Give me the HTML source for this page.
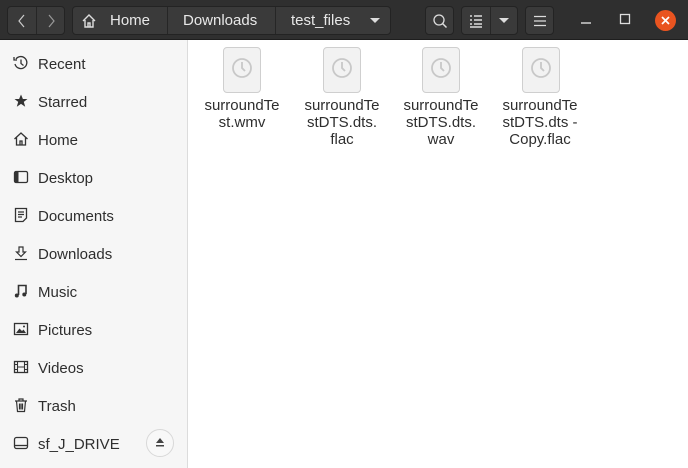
<!DOCTYPE html>
<html><head><style>
*{margin:0;padding:0;box-sizing:border-box}
body{width:688px;height:468px;overflow:hidden;font-family:"Liberation Sans","DejaVu Sans",sans-serif;background:#fff;position:relative}
.hdr{position:absolute;left:0;top:0;width:688px;height:40px;background:#2f2f2f;border-bottom:1px solid #1e1e1e}
.btn{position:absolute;top:6px;height:29px;background:#3a3a3a;border:1px solid #232323;border-radius:4px;color:#ddd}
.sep{position:absolute;top:0;bottom:0;width:1px;background:#262626}
.crumb{position:absolute;top:5px;font-size:15px;color:#e8e8e8}
.side{position:absolute;left:0;top:40px;width:188px;height:428px;background:#f6f6f6;border-right:1px solid #dcdcdc}
.it{position:absolute;left:38px;font-size:15px;color:#2e2e2e;margin-top:2px}
.ic{position:absolute;left:13px;width:16px;height:16px}
.file{position:absolute;top:47px;width:38px;height:46px;background:#f2f2f2;border:1px solid #cfcfcf;border-radius:4px}
.file svg{position:absolute;left:7px;top:9px}
.lbl{position:absolute;top:96px;width:100px;text-align:center;font-size:15px;line-height:17px;color:#2e2e2e}
</style></head><body>
<div class="hdr">
 <div class="btn" style="left:7px;width:58px"><div class="sep" style="left:28px"></div>
  <svg style="position:absolute;left:9px;top:7px" width="10" height="14"><path d="M7 1L2 7L7 13" stroke="#ccc" fill="none" stroke-width="1.2"/></svg>
  <svg style="position:absolute;left:38px;top:7px" width="10" height="14"><path d="M3 1L8 7L3 13" stroke="#999" fill="none" stroke-width="1.2"/></svg>
 </div>
 <div class="btn" style="left:72px;width:319px"><div class="sep" style="left:94px"></div><div class="sep" style="left:202px"></div>
  <svg style="position:absolute;left:8px;top:6px" width="16" height="16"><path d="M2 8L8 2L14 8M4 7V14H12V7M7 14V10H9V14" stroke="#ddd" fill="none" stroke-width="1.4"/></svg>
  <span class="crumb" style="left:37px">Home</span><span class="crumb" style="left:110px">Downloads</span><span class="crumb" style="left:218px">test_files</span>
  <svg style="position:absolute;left:297px;top:11px" width="10" height="6"><path d="M0 0H10L5 5Z" fill="#ddd"/></svg>
 </div>
 <div class="btn" style="left:425px;width:29px"><svg style="position:absolute;left:6px;top:6px" width="16" height="16"><circle cx="7" cy="7" r="5" stroke="#ddd" fill="none" stroke-width="1.3"/><path d="M10.5 10.5L14.5 14.5" stroke="#ddd" stroke-width="1.5"/></svg></div>
 <div class="btn" style="left:461px;width:57px"><div class="sep" style="left:28px"></div>
  <svg style="position:absolute;left:7px;top:7px" width="14" height="14"><path d="M1 2h2M1 6h2M1 10h2M5 2h8M5 6h8M5 10h8M1 13h12" stroke="#ddd" stroke-width="1.4"/></svg>
  <svg style="position:absolute;left:37px;top:11px" width="10" height="6"><path d="M0 0H10L5 5Z" fill="#ddd"/></svg>
 </div>
 <div class="btn" style="left:525px;width:29px"><svg style="position:absolute;left:7px;top:8px" width="14" height="12"><path d="M1 1.5h12M1 6h12M1 10.5h12" stroke="#ddd" stroke-width="1.3"/></svg></div>
 <svg style="position:absolute;left:580px;top:14px" width="12" height="12"><path d="M1 9h10" stroke="#ddd" stroke-width="1.4"/></svg>
 <svg style="position:absolute;left:619px;top:13px" width="12" height="12"><rect x="1.5" y="1.5" width="9" height="9" stroke="#ddd" fill="none" stroke-width="1.3"/></svg>
 <div style="position:absolute;left:655px;top:10px;width:21px;height:21px;border-radius:50%;background:#e95420"></div>
 <svg style="position:absolute;left:660px;top:15px" width="11" height="11"><path d="M2 2L9 9M9 2L2 9" stroke="#fff" stroke-width="1.7"/></svg>
</div>
<div class="side">
 <svg class="ic" style="top:15px" viewBox="0 0 16 16"><path d="M3 4A6 6 0 1 1 2 9" stroke="#333" fill="none" stroke-width="1.3"/><path d="M1 2V5H4" stroke="#333" fill="none" stroke-width="1.3"/><path d="M8 4.5V8.5L10.5 10.5" stroke="#333" fill="none" stroke-width="1.3"/></svg><span class="it" style="top:14px">Recent</span>
 <svg class="ic" style="top:53px" viewBox="0 0 16 16"><path d="M8 1.5L9.9 6H14.5L10.8 8.9L12.2 13.7L8 10.9L3.8 13.7L5.2 8.9L1.5 6H6.1Z" fill="#333"/></svg><span class="it" style="top:52px">Starred</span>
 <svg class="ic" style="top:91px" viewBox="0 0 16 16"><path d="M1.5 8L8 2L14.5 8M3.5 6.5V14H12.5V6.5M7 14V10H9V14" stroke="#333" fill="none" stroke-width="1.3"/></svg><span class="it" style="top:90px">Home</span>
 <svg class="ic" style="top:129px" viewBox="0 0 16 16"><rect x="1.5" y="2.5" width="13" height="11" rx="1.5" stroke="#333" fill="none" stroke-width="1.3"/><rect x="1.5" y="2.5" width="4" height="11" fill="#333"/></svg><span class="it" style="top:128px">Desktop</span>
 <svg class="ic" style="top:167px" viewBox="0 0 16 16"><path d="M2.5 1.5H13.5V11L10 14.5H2.5Z" stroke="#333" fill="none" stroke-width="1.3"/><path d="M5 5h6M5 7.5h6M5 10h4" stroke="#333" stroke-width="1.2"/></svg><span class="it" style="top:166px">Documents</span>
 <svg class="ic" style="top:205px" viewBox="0 0 16 16"><path d="M6 2H10V7H12.5L8 11.5L3.5 7H6Z" stroke="#333" fill="none" stroke-width="1.2"/><path d="M2 14.5H14" stroke="#333" stroke-width="1.2"/></svg><span class="it" style="top:204px">Downloads</span>
 <svg class="ic" style="top:243px" viewBox="0 0 16 16"><path d="M5.5 12V2.5H13V11" stroke="#333" fill="none" stroke-width="1.6"/><circle cx="3.8" cy="12.5" r="2" fill="#333"/><circle cx="11.3" cy="11.5" r="2" fill="#333"/></svg><span class="it" style="top:242px">Music</span>
 <svg class="ic" style="top:281px" viewBox="0 0 16 16"><rect x="1.5" y="2.5" width="13" height="11" stroke="#333" fill="none" stroke-width="1.3"/><path d="M3 12L6.5 7.5L9 10L10.5 8.5L13 12Z" fill="#333"/><circle cx="11" cy="5.5" r="1" fill="#333"/></svg><span class="it" style="top:280px">Pictures</span>
 <svg class="ic" style="top:319px" viewBox="0 0 16 16"><rect x="1.5" y="2.5" width="13" height="11" stroke="#333" fill="none" stroke-width="1.3"/><path d="M4.5 2.5V13.5M11.5 2.5V13.5M4.5 8H11.5M1.5 5.5H4.5M1.5 10.5H4.5M11.5 5.5H14.5M11.5 10.5H14.5" stroke="#333" stroke-width="1.1"/></svg><span class="it" style="top:318px">Videos</span>
 <svg class="ic" style="top:357px" viewBox="0 0 16 16"><path d="M2 4H14M6 4V2H10V4M3.5 4L4.5 14.5H11.5L12.5 4M6.5 6.5V12.5M8 6.5V12.5M9.5 6.5V12.5" stroke="#333" fill="none" stroke-width="1.2"/></svg><span class="it" style="top:356px">Trash</span>
 <svg class="ic" style="top:395px" viewBox="0 0 16 16"><rect x="1.5" y="2.5" width="13" height="11" rx="2" stroke="#333" fill="none" stroke-width="1.3"/><path d="M1.5 10.5H14.5" stroke="#333" stroke-width="1.3"/></svg><span class="it" style="top:394px">sf_J_DRIVE</span>
 <div style="position:absolute;left:146px;top:389px;width:28px;height:28px;border-radius:50%;border:1px solid #d8d8d8;background:#f8f8f8"></div>
 <svg style="position:absolute;left:155px;top:397px" width="10" height="10"><path d="M5 1L9 6H1Z M1 8H9V9.5H1Z" fill="#444"/></svg>
</div>
<div class="file" style="left:223px"><svg width="22" height="22"><circle cx="11" cy="11" r="9" stroke="#c8c8c8" fill="none" stroke-width="1.8"/><path d="M11 5V11L14 14" stroke="#c8c8c8" fill="none" stroke-width="1.8"/></svg></div>
<div class="file" style="left:323px"><svg width="22" height="22"><circle cx="11" cy="11" r="9" stroke="#c8c8c8" fill="none" stroke-width="1.8"/><path d="M11 5V11L14 14" stroke="#c8c8c8" fill="none" stroke-width="1.8"/></svg></div>
<div class="file" style="left:422px"><svg width="22" height="22"><circle cx="11" cy="11" r="9" stroke="#c8c8c8" fill="none" stroke-width="1.8"/><path d="M11 5V11L14 14" stroke="#c8c8c8" fill="none" stroke-width="1.8"/></svg></div>
<div class="file" style="left:522px"><svg width="22" height="22"><circle cx="11" cy="11" r="9" stroke="#c8c8c8" fill="none" stroke-width="1.8"/><path d="M11 5V11L14 14" stroke="#c8c8c8" fill="none" stroke-width="1.8"/></svg></div>
<div class="lbl" style="left:192px;top:97px">surroundTe<br>st.wmv</div>
<div class="lbl" style="left:292px;top:97px">surroundTe<br>stDTS.dts.<br>flac</div>
<div class="lbl" style="left:391px;top:97px">surroundTe<br>stDTS.dts.<br>wav</div>
<div class="lbl" style="left:490px;top:97px">surroundTe<br>stDTS.dts -<br>Copy.flac</div>
</body></html>
